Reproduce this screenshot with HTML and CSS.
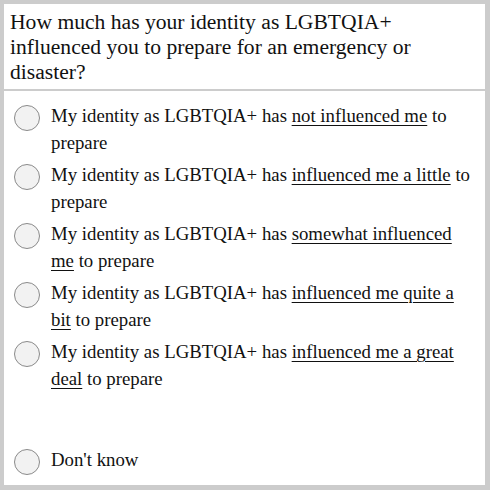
FILE: index.html
```html
<!DOCTYPE html>
<html>
<head>
<meta charset="utf-8">
<link rel="stylesheet" href="styles.css">
</head>
<body>
<div class="card">
  <div class="question">How much has your identity as LGBTQIA+ influenced you to prepare for an emergency or disaster?</div>
  <div class="options">
    <label class="option"><span class="radio"></span><span class="text">My identity as LGBTQIA+ has <u>not influenced me</u> to prepare</span></label>
    <label class="option"><span class="radio"></span><span class="text">My identity as LGBTQIA+ has <u>influenced me a little</u> to prepare</span></label>
    <label class="option"><span class="radio"></span><span class="text">My identity as LGBTQIA+ has <u>somewhat influenced</u> <u>me</u> to prepare</span></label>
    <label class="option"><span class="radio"></span><span class="text">My identity as LGBTQIA+ has <u>influenced me quite a</u> <u>bit</u> to prepare</span></label>
    <label class="option"><span class="radio"></span><span class="text">My identity as LGBTQIA+ has <u>influenced me a great</u> <u>deal</u> to prepare</span></label>
    <label class="option dk"><span class="radio"></span><span class="text">Don't know</span></label>
  </div>
</div>
</body>
</html>
```
FILE: styles.css
```css
html, body { margin: 0; padding: 0; }
body {
  background: #cccccc;
  width: 490px;
  height: 490px;
  font-family: "Liberation Serif", serif;
  color: #111;
}
.card {
  margin: 4px;
  width: 481px;
  height: 481px;
  background: #fff;
  box-sizing: border-box;
}
.question {
  font-size: 21.6px;
  line-height: 25px;
  padding: 6px 6px 4px 6px;
  border-bottom: 2px solid #cccccc;
}
.options {
  padding: 11px 0 0 10px;
}
.option {
  display: flex;
  align-items: flex-start;
  gap: 11px;
  margin-bottom: 5px;
  font-size: 18.8px;
  line-height: 27px;
}
.radio {
  flex: none;
  width: 24px;
  height: 24px;
  border: 1px solid #8a8a8a;
  border-radius: 50%;
  background: #f2f2f2;
  margin-top: 3px;
}
.text { width: 425px; }
.text u {
  text-decoration-thickness: 1px;
  text-underline-offset: 3px;
}
.dk { margin-top: 54px; }
```
